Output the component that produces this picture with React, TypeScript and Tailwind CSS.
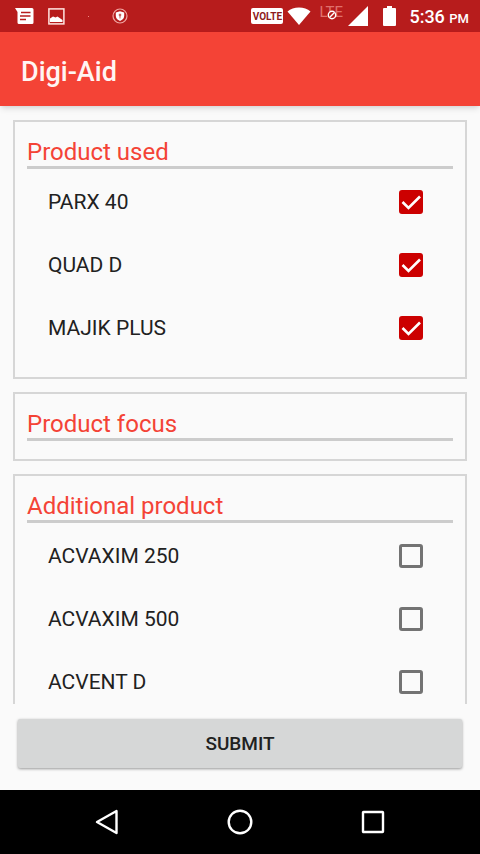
import { useState } from "react";

const usedProducts = ["PARX 40", "QUAD D", "MAJIK PLUS"];
const additionalProducts = ["ACVAXIM 250", "ACVAXIM 500", "ACVENT D"];

function StatusBar() {
    return (
        <div className="flex h-8 shrink-0 items-center justify-between bg-[#b71c1c] pl-[15px] pr-[11px] text-white">
            <div className="flex items-center">
                <svg width="19" height="17" viewBox="0 0 19 17">
                    <path d="M0 0h17a1.500 1.500 0 0 1 1.500 1.500v13a1.500 1.500 0 0 1-1.500 1.500H4a1.500 1.500 0 0 1-1.500-1.500V4z" fill="#fff" />
                    <path d="M6 4.500h9.500M5 8h10.500M5 11.500h6" stroke="#b71c1c" strokeWidth="1.500" />
                </svg>
                <svg className="ml-3.5" width="17" height="17" viewBox="0 0 17 17">
                    <rect x="0.900" y="0.900" width="15" height="15" fill="none" stroke="#ffe3e0" strokeWidth="1.500" />
                    <path d="M2 14v-3.500l3-2 2.500 1 2-1 5 3.500v2z" fill="#fff" />
                </svg>
                <span className="ml-[23px] h-px w-px bg-[#ef8a84]" />
                <svg className="ml-[23px]" width="16" height="16" viewBox="0 0 16 16">
                    <circle cx="8" cy="8" r="7" fill="none" stroke="#f0a7a3" strokeWidth="1.200" />
                    <path d="M8 3.200l4.200 1.300v3.300c0 2.500-1.700 4.200-4.200 5.200-2.500-1-4.200-2.700-4.200-5.200V4.500z" fill="#fff" />
                    <path d="M6.800 5.800h2.400v2L8.500 8.500v2h-1v-2l-0.700-0.700z" fill="#c9605c" />
                </svg>
            </div>
            <div className="flex items-center">
                <span className="flex h-4 w-8 items-center justify-center rounded-xs bg-white text-[10px] font-bold text-[#8e1b1b]">VOLTE</span>
                <svg className="ml-1" width="24" height="18" viewBox="0 0 24 18">
                    <path d="M12 18L0.500 4.500C3.500 2 7.500 0.500 12 0.500s8.500 1.500 11.500 4z" fill="#fff" />
                </svg>
                <div className="relative ml-2 flex h-5 w-6">
                    <span className="text-[15px] leading-3 text-[#e0706c]">LTE</span>
                    <svg className="absolute left-2 top-1" width="10" height="10" viewBox="0 0 10 10">
                        <circle cx="5" cy="5" r="3.700" fill="#b71c1c" stroke="#fff" strokeWidth="1.400" />
                        <path d="M2.800 7.200l4.400-4.400" stroke="#fff" strokeWidth="1.400" />
                    </svg>
                </div>
                <svg className="ml-[5px]" width="20" height="20" viewBox="0 0 20 20">
                    <path d="M20 0v20H0z" fill="#fff" />
                </svg>
                <svg className="ml-[15px]" width="13" height="20" viewBox="0 0 13 20">
                    <path d="M4 0h5v2h3a1 1 0 0 1 1 1v16a1 1 0 0 1-1 1H1a1 1 0 0 1-1-1V3a1 1 0 0 1 1-1h3z" fill="#fff" />
                </svg>
                <span className="ml-[13px] whitespace-nowrap pt-1 text-lg font-medium leading-6">
                    5:36 <span className="text-[13px]">PM</span>
                </span>
            </div>
        </div>
    );
}

function ProductRow({ name, defaultChecked }: { name: string; defaultChecked: boolean }) {
    const [checked, setChecked] = useState(defaultChecked);

    return (
        <li>
            <label className="flex h-[63px] items-center justify-between pl-[21px] pr-[30px] text-[21px] leading-8 text-[#212121]">
                {name}
                <span className="grid">
                    <input
                        type="checkbox"
                        checked={checked}
                        onChange={(e) => setChecked(e.target.checked)}
                        className="col-start-1 row-start-1 size-6 appearance-none rounded-[3px] border-[3px] border-[#737373] checked:border-[#cc0000] checked:bg-[#cc0000]"
                    />
                    {checked && (
                        <svg className="pointer-events-none col-start-1 row-start-1" width="24" height="24" viewBox="0 0 24 24">
                            <path d="M3.500 12l6 6L21 6.500" fill="none" stroke="#fff" strokeWidth="2.600" />
                        </svg>
                    )}
                </span>
            </label>
        </li>
    );
}

function ProductCard({ title, products, checked = false }: { title: string; products: string[]; checked?: boolean }) {
    return (
        <section className="border-2 border-[#d6d6d6] px-3 pb-[18px] pt-4">
            <h2 className="border-b-[3px] border-[#cccccc] text-2xl leading-7 text-[#f44336]">{title}</h2>
            {products.length > 0 && (
                <ul className="pt-px">
                    {products.map((name) => (
                        <ProductRow key={name} name={name} defaultChecked={checked} />
                    ))}
                </ul>
            )}
        </section>
    );
}

function NavBar() {
    return (
        <nav className="flex h-16 shrink-0 justify-center bg-black">
            <button type="button" aria-label="Back" className="flex w-[133px] items-center justify-center">
                <svg width="24" height="26" viewBox="0 0 24 26">
                    <path d="M21.500 2v22L2 13z" fill="none" stroke="#fff" strokeWidth="2.400" strokeLinejoin="round" />
                </svg>
            </button>
            <button type="button" aria-label="Home" className="flex w-[133px] items-center justify-center">
                <svg width="26" height="26" viewBox="0 0 26 26">
                    <circle cx="13" cy="13" r="11.300" fill="none" stroke="#fff" strokeWidth="2.400" />
                </svg>
            </button>
            <button type="button" aria-label="Recent apps" className="flex w-[133px] items-center justify-center">
                <svg width="24" height="24" viewBox="0 0 24 24">
                    <rect x="2" y="2" width="20" height="20" rx="0.500" fill="none" stroke="#fff" strokeWidth="2.400" />
                </svg>
            </button>
        </nav>
    );
}

function App() {
    return (
        <div className="flex h-screen flex-col bg-[#fafafa] font-[Roboto,sans-serif]">
            <StatusBar />
            <header className="z-10 flex h-[74px] shrink-0 items-center bg-[#f44336] px-[21px] pt-1.5 shadow-md">
                <h1 className="text-[27px] font-medium text-[#fff5f3]">Digi-Aid</h1>
            </header>
            <main className="flex min-h-0 flex-1 flex-col">
                <div className="flex min-h-0 flex-1 flex-col gap-[13px] overflow-y-auto px-[13px] pt-3.5 [scrollbar-width:none]">
                    <ProductCard title="Product used" products={usedProducts} checked />
                    <ProductCard title="Product focus" products={[]} />
                    <ProductCard title="Additional product" products={additionalProducts} />
                </div>
                <div className="px-[18px] pb-[22px] pt-[15px]">
                    <button type="button" className="h-[49px] w-full rounded-xs bg-[#d6d7d7] pt-0.5 text-[19px] font-medium text-[#212121] shadow-[0_1px_3px_rgba(0,0,0,0.4)]">
                        SUBMIT
                    </button>
                </div>
            </main>
            <NavBar />
        </div>
    );
}

export default App;
